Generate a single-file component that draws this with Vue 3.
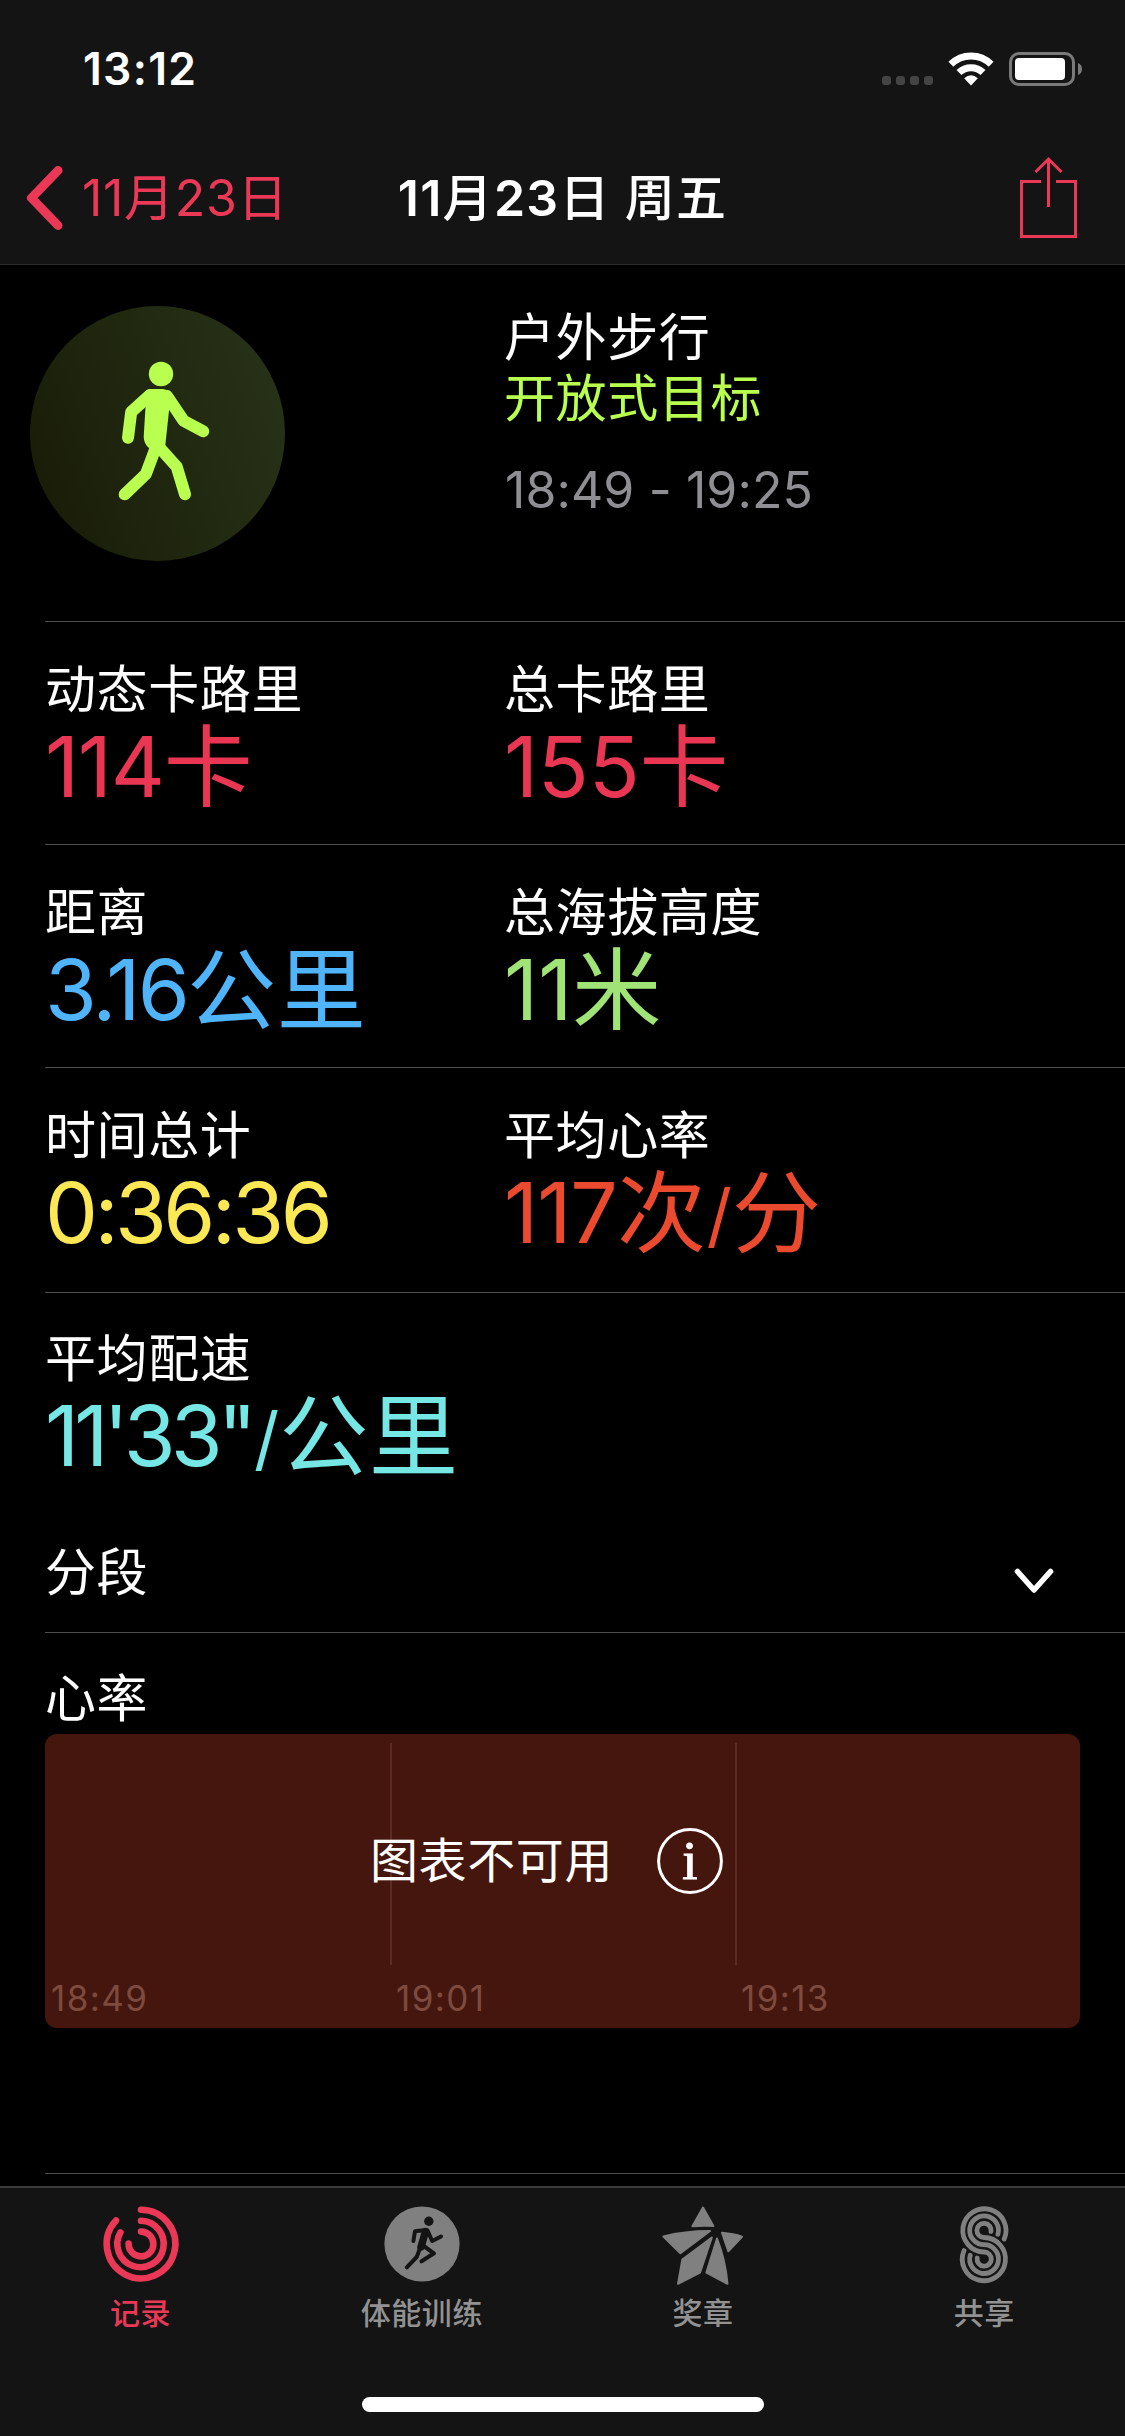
<template>
  <div class="screen">
    <header class="top">
      <div class="status">
        <span class="clock">13:12</span>
        <div class="status-icons">
          <div class="signal"><i v-for="n in 4" :key="n"></i></div>
          <svg class="wifi" width="46" height="34" viewBox="0 0 46 34">
            <path d="M2.9 12.2A28.5 28.5 0 0 1 43.1 12.2" />
            <path d="M11 20.6A17 17 0 0 1 35 20.6" />
            <path class="wifi-dot" d="M23 33.5L16.2 26.3Q23 20.4 29.8 26.3Z" />
          </svg>
          <svg class="battery" width="73" height="34" viewBox="0 0 73 34">
            <rect class="shell" x="1.5" y="1.5" width="63" height="31" rx="8.5" />
            <rect class="charge" x="6" y="6" width="50" height="22" rx="4" />
            <path class="nub" d="M69 11Q73 12.5 73 17Q73 21.5 69 23Z" />
          </svg>
        </div>
      </div>
      <nav class="navbar">
        <div class="back">
          <svg width="38" height="64" viewBox="0 0 38 64">
            <path d="M31 4.5L4.5 32L31 59.5" />
          </svg>
          <span>11月23日</span>
        </div>
        <h1>11<b>月</b>23<b>日</b> <b>周五</b></h1>
        <svg class="share" width="58" height="82" viewBox="0 0 58 82">
          <path d="M21 24.5H1.5V79.5H55.5V24.5H36" />
          <path d="M28.5 50V2M15.5 15L28.5 2L41.5 15" />
        </svg>
      </nav>
    </header>

    <main>
      <section class="summary">
        <div class="badge">
          <svg width="255" height="255" viewBox="0 0 255 255">
            <ellipse cx="131" cy="68" rx="12.2" ry="12.2" />
            <path class="torso" d="M120.5 83H133Q139 83.5 143.8 90L139.2 103L135.2 140L119.5 142.5Q113.8 138 113.7 130.7L115.5 101.3L112 90Q116 83 120.5 83Z" />
            <path class="limb" d="M120 89L101.2 106L98 131.7" />
            <path class="limb" d="M137 90L153.5 114.7L173.2 125.3" />
            <path class="limb" d="M126 141L115.9 168L94.7 188.3" />
            <path class="limb" d="M129 141L146.7 160.7L155 188.3" />
          </svg>
        </div>
        <div class="about">
          <p>户外步行</p>
          <p class="goal">开放式目标</p>
          <p class="time">18:49 - 19:25</p>
        </div>
      </section>

      <section v-for="(row, i) in rows" :key="i" class="row">
        <div v-for="item in row" :key="item.label" class="metric">
          <p class="label">{{ item.label }}</p>
          <p class="value" :class="item.color">
            <span
              v-for="(part, j) in item.parts"
              :key="j"
              :class="kind(part)"
              :style="j === 0 ? { letterSpacing: item.tracking + 'px' } : null"
            >{{ part }}</span>
          </p>
        </div>
      </section>

      <section class="segments">
        <p class="label">分段</p>
        <svg width="40" height="26" viewBox="0 0 40 26">
          <path d="M3.5 3.5L20 22L36.5 3.5" />
        </svg>
      </section>

      <section class="heart">
        <p class="label">心率</p>
        <div class="chart">
          <div v-for="t in ticks" :key="t" class="slot">
            <div class="grid-line"></div>
            <span>{{ t }}</span>
          </div>
          <div class="notice">
            <span>图表不可用</span>
            <svg width="66" height="66" viewBox="0 0 66 66">
              <circle cx="33" cy="33" r="31.4" />
              <text x="33" y="51" text-anchor="middle">i</text>
            </svg>
          </div>
        </div>
      </section>
    </main>

    <footer class="tabbar">
      <div class="tabs">
        <div class="tab active">
          <svg width="76" height="76" viewBox="0 0 76 76">
            <g class="rings">
              <path d="M38 3.7A34.3 34.3 0 1 1 13 14.5" />
              <path d="M38 14.8A23.2 23.2 0 1 1 17.4 26.4" />
              <path d="M38 25.6A12.4 12.4 0 1 1 25.6 37.6" />
            </g>
          </svg>
          <span>记录</span>
        </div>
        <div class="tab">
          <svg width="76" height="76" viewBox="0 0 76 76">
            <circle cx="38" cy="38" r="37.6" />
            <g class="runner">
              <circle cx="44.8" cy="15.3" r="4.7" />
              <path class="trunk" d="M41.5 25.5L37 41" />
              <path d="M42 24L31 25.2L29.4 35" />
              <path d="M43.5 24.5L48.2 35L57 30.5" />
              <path d="M36.5 41L32.7 51L22.8 61.3" />
              <path d="M39 39.5L50 47.3L37.5 55.3" />
            </g>
          </svg>
          <span>体能训练</span>
        </div>
        <div class="tab">
          <svg width="82" height="80" viewBox="0 0 82 80">
            <g class="star">
              <path d="M41 1.5L51.4 20Q41 19.6 30.4 20.2Z" />
              <path d="M1.4 30.5Q22 25 48 25L18.4 47.3Z" />
              <path d="M49.8 31.5L38 66.6L16 77.8L20.3 53.6Z" />
              <path d="M55 32.5Q63.5 54 65.5 77.8L44.4 66.6Z" />
              <path d="M60 26.8Q72 27.8 80 30.7L66.3 45.2Z" />
            </g>
          </svg>
          <span>奖章</span>
        </div>
        <div class="tab">
          <svg width="48" height="78" viewBox="0 0 48 78">
            <g class="loops">
              <path d="M44.2 33A21.6 21.6 0 1 0 24 46A7.1 7.1 0 1 1 17.2 52" />
              <path d="M37.9 28.3A14.4 14.4 0 1 0 24 38.7A14.4 14.4 0 1 1 10.2 49.3" />
              <path d="M31 25.5A7.1 7.1 0 1 0 24 31.5A21.6 21.6 0 1 1 4 44.6" />
            </g>
          </svg>
          <span>共享</span>
        </div>
      </div>
      <div class="home"></div>
    </footer>
  </div>
</template>

<script setup>
const rows = [
  [
    { label: '动态卡路里', parts: ['114', '卡'], color: 'pink', tracking: -1.3 },
    { label: '总卡路里', parts: ['155', '卡'], color: 'pink', tracking: -0.3 },
  ],
  [
    { label: '距离', parts: ['3.16', '公里'], color: 'blue', tracking: -2.8 },
    { label: '总海拔高度', parts: ['11', '米'], color: 'green', tracking: 0 },
  ],
  [
    { label: '时间总计', parts: ['0:36:36'], color: 'yellow', tracking: -3.6 },
    { label: '平均心率', parts: ['117', '次', '/', '分'], color: 'orange', tracking: -1 },
  ],
  [
    { label: '平均配速', parts: ['11\'33"', '/', '公里'], color: 'cyan', tracking: -4.9 },
  ],
]

const ticks = ['18:49', '19:01', '19:13']

function kind(part) {
  if (part === '/') return 'slash'
  return /^\d/.test(part) ? 'num' : 'unit'
}
</script>

<style>
body {
  background: #000;
}
</style>

<style scoped>
.screen {
  width: 1125px;
  height: 2436px;
  display: flex;
  flex-direction: column;
  overflow: hidden;
  background: #000;
  color: #fff;
  font-family: Inter, "Noto Sans CJK SC", sans-serif;
}
p,
h1 {
  margin: 0;
}
svg {
  display: block;
  flex: none;
  overflow: visible;
}
path {
  fill: none;
}

/* header */
.top {
  box-sizing: border-box;
  height: 265px;
  flex: none;
  background: #141414;
  border-bottom: 1px solid #2b2b2b;
}
.status {
  height: 138px;
  display: flex;
  justify-content: space-between;
  align-items: center;
  padding: 0 43px 0 83px;
}
.clock {
  font-size: 44.5px;
  font-weight: 600;
  letter-spacing: 1.3px;
}
.status-icons {
  display: flex;
  align-items: center;
  gap: 15px;
}
.signal {
  display: flex;
  gap: 5px;
  padding-top: 23px;
}
.signal i {
  width: 9px;
  height: 9px;
  border-radius: 3px;
  background: #444;
}
.wifi path {
  stroke: #fff;
  stroke-width: 7;
}
.wifi .wifi-dot {
  fill: #fff;
  stroke: none;
}
.shell {
  fill: none;
  stroke: #7a7a7a;
  stroke-width: 3;
}
.charge {
  fill: #fff;
}
.nub {
  fill: #7a7a7a;
}
.navbar {
  height: 120px;
  display: grid;
  grid-template-columns: 1fr auto 1fr;
  align-items: center;
  padding: 0 47px 0 27px;
  font-size: 50px;
  line-height: 60px;
}
.back {
  display: flex;
  align-items: center;
  gap: 17px;
  color: #eb3857;
  letter-spacing: 0.7px;
}
.back span,
h1 {
  padding-bottom: 1px;
}
.back path {
  stroke: #eb3857;
  stroke-width: 9;
  stroke-linecap: round;
  stroke-linejoin: round;
}
h1 {
  padding-left: 20px;
  font-size: 50px;
  font-weight: 600;
  letter-spacing: 1.3px;
}
h1 b {
  font-weight: 500;
}
.share {
  justify-self: end;
}
.share path {
  stroke: #eb3857;
  stroke-width: 3;
}

/* workout summary */
main {
  flex: 1;
  padding-left: 45px;
}
.summary {
  box-sizing: border-box;
  height: 357px;
  display: flex;
  padding-top: 41px;
  border-bottom: 1px solid #4e4e50;
}
.badge {
  width: 255px;
  height: 255px;
  margin-left: -15px;
  margin-right: 219px;
  border-radius: 50%;
  background: linear-gradient(70deg, #181b06, #293419);
}
.badge ellipse,
.badge .torso {
  fill: #b9ff50;
}
.limb {
  stroke: #b9ff50;
  stroke-width: 12;
  stroke-linecap: round;
  stroke-linejoin: round;
}
.about {
  padding-top: 1px;
  font-size: 51px;
  line-height: 61px;
  letter-spacing: 0.6px;
}
.goal {
  color: #b9ff50;
}
.time {
  margin-top: 31px;
  padding-left: 1px;
  font-size: 50px;
  letter-spacing: 0.1px;
  color: #8e8e93;
}

/* metrics */
.row {
  box-sizing: border-box;
  height: 223px;
  display: flex;
  padding-top: 38px;
  border-bottom: 1px solid #4e4e50;
}
.row:nth-of-type(4) {
  height: 225px;
}
.row:nth-of-type(5) {
  height: 217px;
  padding-top: 36px;
  border: none;
}
.metric {
  width: 459px;
  white-space: nowrap;
}
.label {
  font-size: 51px;
  line-height: 60px;
  letter-spacing: 0.6px;
}
.value {
  height: 84px;
  margin-top: 5px;
  display: flex;
  font-size: 84px;
  line-height: 84px;
}
.unit {
  font-size: 89px;
  letter-spacing: 0.8px;
}
.slash {
  padding-top: 2px;
  font-size: 70px;
}
.cyan .slash {
  margin-left: 2px;
}
.pink { color: #e83653; }
.blue { color: #50b4fb; }
.green { color: #a0e377; }
.yellow { color: #fce754; }
.orange { color: #eb4a2e; }
.cyan { color: #76e7e4; }

.segments {
  box-sizing: border-box;
  height: 123px;
  display: flex;
  justify-content: space-between;
  padding: 33px 71px 0 0;
  border-bottom: 1px solid #4e4e50;
}
.segments svg {
  margin-top: 25px;
}
.segments path {
  stroke: #fff;
  stroke-width: 5.6;
  stroke-linecap: round;
  stroke-linejoin: round;
}

/* heart rate */
.heart {
  box-sizing: border-box;
  height: 541px;
  padding-top: 36px;
  border-bottom: 1px solid #4e4e50;
}
.chart {
  position: relative;
  width: 1035px;
  height: 294px;
  margin-top: 5px;
  display: grid;
  grid-template-columns: repeat(3, 1fr);
  border-radius: 12px;
  background: #45160d;
}
.slot {
  padding-top: 9px;
  font-size: 35px;
  line-height: 40px;
  color: #7d4a3f;
}
.grid-line {
  width: 2px;
  height: 222px;
  margin-bottom: 13px;
  background: #5e2b22;
}
.slot:first-child .grid-line {
  background: none;
}
.slot span {
  padding-left: 6px;
  letter-spacing: 1.4px;
}
.notice {
  position: absolute;
  top: 94px;
  left: 325px;
  display: flex;
  align-items: center;
  gap: 44px;
  font-size: 48px;
  line-height: 66px;
  letter-spacing: 0.6px;
}
.notice circle {
  fill: none;
  stroke: #fff;
  stroke-width: 3;
}
.notice text {
  fill: #fff;
  stroke: #fff;
  stroke-width: 1;
  font-family: "Liberation Serif", serif;
  font-size: 55px;
  letter-spacing: 0;
}

/* tab bar */
.tabbar {
  box-sizing: border-box;
  height: 250px;
  flex: none;
  background: #141414;
  border-top: 2px solid #3c3c3c;
}
.tabs {
  display: grid;
  grid-template-columns: repeat(4, 1fr);
  padding-top: 18px;
}
.tab {
  display: grid;
  grid-template-rows: 80px 36px;
  row-gap: 9px;
  justify-items: center;
  align-content: start;
  height: 191px;
  color: #929292;
  font-size: 30px;
  font-weight: 500;
  line-height: 36px;
  letter-spacing: 0.6px;
}
.tab circle {
  fill: #808080;
}
.active {
  color: #eb3857;
}
.rings path {
  stroke: #eb3857;
  stroke-width: 6.6;
  stroke-linecap: round;
}
.runner path {
  stroke: #141414;
  stroke-width: 4;
  stroke-linecap: round;
  stroke-linejoin: round;
}
.runner .trunk {
  stroke-width: 7.5;
}
.tab .runner circle {
  fill: #141414;
}
.star path {
  fill: #808080;
  stroke: #808080;
  stroke-width: 2;
  stroke-linejoin: round;
}
.loops path {
  stroke: #808080;
  stroke-width: 4.8;
  stroke-linecap: round;
}
.home {
  width: 402px;
  height: 15px;
  margin: 0 auto;
  border-radius: 8px;
  background: #fff;
}
</style>
